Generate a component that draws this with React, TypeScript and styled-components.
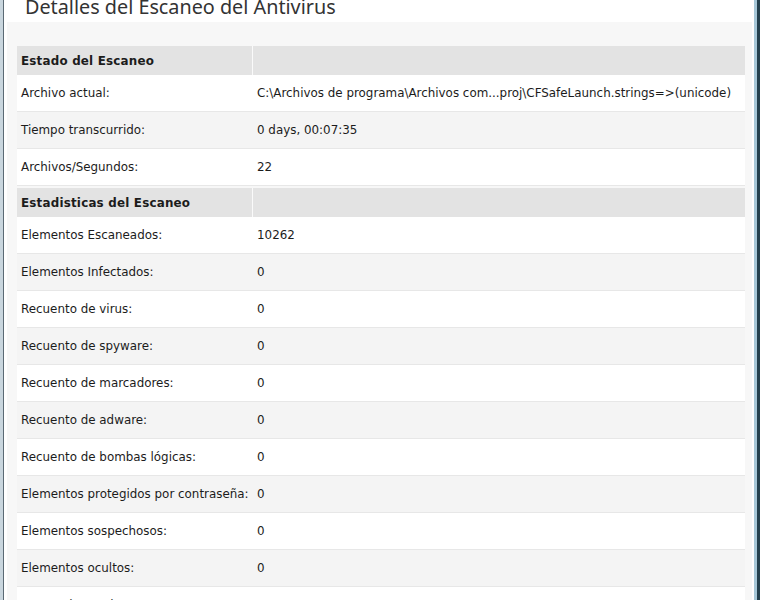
import * as React from 'react';
import styled, { createGlobalStyle } from 'styled-components';

const GlobalStyle = createGlobalStyle`
  html, body {
    margin: 0;
    padding: 0;
    background: #ffffff;
    overflow: hidden;
  }
`;

const Window = styled.div`
  display: flex;
  width: 760px;
  height: 600px;
  overflow: hidden;
  background: #ffffff;
`;

const LeftEdge = styled.div`
  width: 3px;
  flex: none;
  background: #c9d6de;
  border-right: 1px solid #5b6a74;
`;

const RightEdge = styled.div`
  width: 3px;
  flex: none;
  background: #24404e;
  border-left: 3px solid #a6c7d8;
`;

const Content = styled.div`
  flex: 1;
  display: flex;
  flex-direction: column;
  min-width: 0;
`;

const Title = styled.h1`
  margin: -8px 0 0 0;
  padding-left: 21px;
  height: 30px;
  font-family: 'Noto Sans', 'DejaVu Sans', sans-serif;
  font-weight: 400;
  font-size: 19.8px;
  line-height: 30px;
  color: #333333;
  white-space: nowrap;
`;

const Panel = styled.div`
  flex: 1;
  margin: 0 2px 0 3px;
  padding: 24px 7px 0 10px;
  background: #f7f7f7;
`;

const Table = styled.div`
  display: grid;
  grid-template-columns: 236px 1fr;
  font-family: 'DejaVu Sans', 'Liberation Sans', sans-serif;
  font-size: 11.9px;
  color: #1c1c1c;
`;

const HeadCell = styled.div<{ $first?: boolean; $gap?: boolean }>`
  height: 29px;
  margin-top: ${(p) => (p.$gap ? '2px' : '0')};
  display: flex;
  align-items: center;
  padding-left: 4px;
  background: #e3e3e3;
  font-weight: 700;
  letter-spacing: 0.2px;
  border-right: ${(p) => (p.$first ? '1px solid #fafafa' : 'none')};
`;

const Cell = styled.div<{ $shade: boolean }>`
  height: 36px;
  display: flex;
  align-items: center;
  padding-left: 4px;
  white-space: nowrap;
  overflow: hidden;
  background: ${(p) => (p.$shade ? '#f4f4f4' : '#ffffff')};
  border-bottom: 1px solid #e7e7e7;
`;

type Row = [string, string];

const sections: { title: string; rows: Row[] }[] = [
  {
    title: 'Estado del Escaneo',
    rows: [
      ['Archivo actual:', 'C:\\Archivos de programa\\Archivos com...proj\\CFSafeLaunch.strings=>(unicode)'],
      ['Tiempo transcurrido:', '0 days, 00:07:35'],
      ['Archivos/Segundos:', '22'],
    ],
  },
  {
    title: 'Estadisticas del Escaneo',
    rows: [
      ['Elementos Escaneados:', '10262'],
      ['Elementos Infectados:', '0'],
      ['Recuento de virus:', '0'],
      ['Recuento de spyware:', '0'],
      ['Recuento de marcadores:', '0'],
      ['Recuento de adware:', '0'],
      ['Recuento de bombas lógicas:', '0'],
      ['Elementos protegidos por contraseña:', '0'],
      ['Elementos sospechosos:', '0'],
      ['Elementos ocultos:', '0'],
      ['Categorías ocultas:', '0'],
    ],
  },
];

export default function App() {
  return (
    <>
      <GlobalStyle />
      <Window>
        <LeftEdge />
        <Content>
          <Title>Detalles del Escaneo del Antivirus</Title>
          <Panel>
            <Table>
              {sections.map((section, sIdx) => (
                <React.Fragment key={section.title}>
                  <HeadCell $first $gap={sIdx > 0}>{section.title}</HeadCell>
                  <HeadCell $gap={sIdx > 0} />
                  {section.rows.map(([label, value], idx) => (
                    <React.Fragment key={label}>
                      <Cell $shade={idx % 2 === 1}>{label}</Cell>
                      <Cell $shade={idx % 2 === 1}>{value}</Cell>
                    </React.Fragment>
                  ))}
                </React.Fragment>
              ))}
            </Table>
          </Panel>
        </Content>
        <RightEdge />
      </Window>
    </>
  );
}
